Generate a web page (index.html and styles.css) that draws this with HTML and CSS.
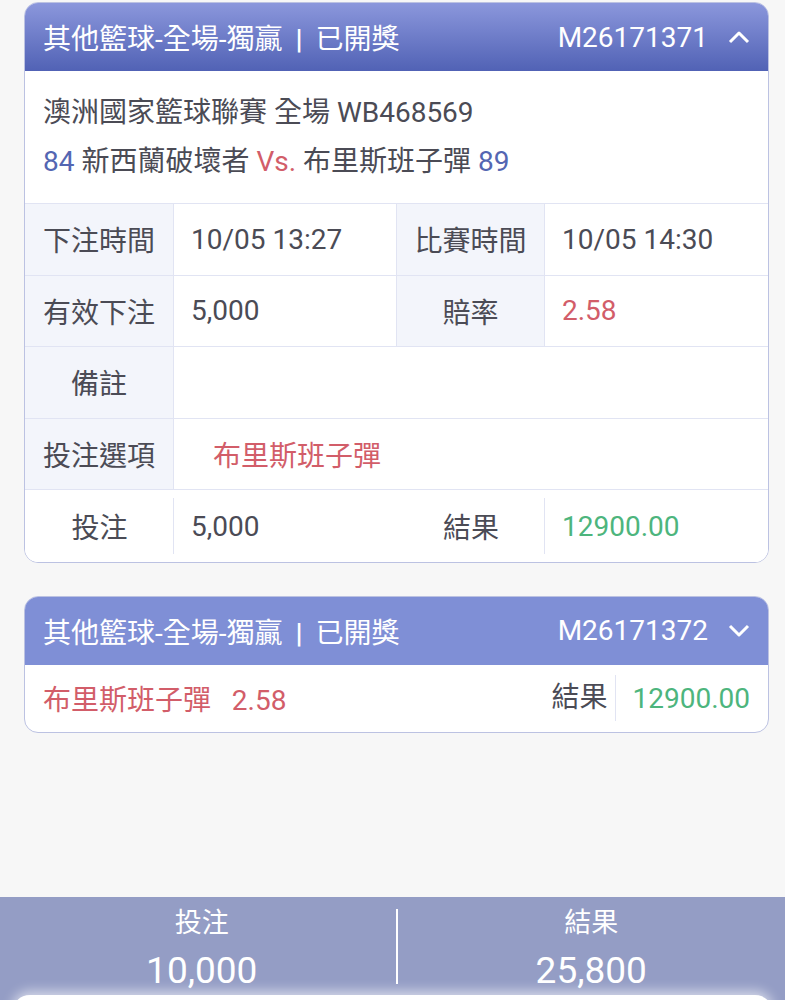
FILE: index.html
```html
<!DOCTYPE html>
<html lang="zh-Hant">
<head>
    <meta charset="UTF-8">
    <meta name="viewport" content="width=device-width, initial-scale=1.0">
    <title>注單明細</title>
    <link rel="stylesheet" href="styles.css">
</head>
<body>
<div class="page">
    <div class="list">
        <div class="card">
            <div class="card-head open">
                <span class="title">其他籃球-全場-獨贏 <b class="bar">|</b> 已開獎</span>
                <span class="order">M26171371
                    <svg class="chev" width="22" height="14" viewBox="0 0 22 14"><polyline points="2,12 11,3 20,12" fill="none" stroke="#fff" stroke-width="3" stroke-linejoin="round"/></svg>
                </span>
            </div>
            <div class="match">
                <div>澳洲國家籃球聯賽 全場 WB468569</div>
                <div><span class="blue">84</span> 新西蘭破壞者 <span class="red">Vs.</span> 布里斯班子彈 <span class="blue">89</span></div>
            </div>
            <div class="grid">
                <div class="lbl">下注時間</div>
                <div class="val">10/05 13:27</div>
                <div class="lbl">比賽時間</div>
                <div class="val">10/05 14:30</div>

                <div class="lbl">有效下注</div>
                <div class="val">5,000</div>
                <div class="lbl">賠率</div>
                <div class="val red">2.58</div>

                <div class="lbl">備註</div>
                <div class="val wide"></div>

                <div class="lbl">投注選項</div>
                <div class="val wide red pick">布里斯班子彈</div>

                <div class="lbl plain">投注</div>
                <div class="val plain sep">5,000</div>
                <div class="lbl plain">結果</div>
                <div class="val plain sep green">12900.00</div>
            </div>
        </div>

        <div class="card">
            <div class="card-head">
                <span class="title">其他籃球-全場-獨贏 <b class="bar">|</b> 已開獎</span>
                <span class="order">M26171372
                    <svg class="chev" width="22" height="14" viewBox="0 0 22 14"><polyline points="2,2 11,11 20,2" fill="none" stroke="#fff" stroke-width="3" stroke-linejoin="round"/></svg>
                </span>
            </div>
            <div class="summary">
                <span class="red">布里斯班子彈&nbsp;&nbsp;&nbsp;2.58</span>
                <span class="res">結果</span>
                <span class="green amount">12900.00</span>
            </div>
        </div>
    </div>

    <div class="footer">
        <div class="totals">
            <div class="total">
                <span>投注</span>
                <strong>10,000</strong>
            </div>
            <div class="divider"></div>
            <div class="total">
                <span>結果</span>
                <strong>25,800</strong>
            </div>
        </div>
        <div class="sheet"></div>
    </div>
</div>
</body>
</html>
```

FILE: styles.css
```css
body {
    margin: 0;
    background: #f7f7f7;
    font-family: Roboto, "Noto Sans CJK TC", sans-serif;
    color: #4b4b55;
    overflow: hidden;
}
.page {
    height: 1000px;
    display: flex;
    flex-direction: column;
}
.list {
    padding: 2px 16px 0 24px;
    display: flex;
    flex-direction: column;
    gap: 33px;
}
.card {
    background: #fff;
    border: 1px solid #bcc2e2;
    border-radius: 14px;
    overflow: hidden;
}
.card-head {
    height: 68px;
    display: flex;
    align-items: center;
    justify-content: space-between;
    padding: 0 18px;
    background: #7f8fd6;
    color: #fff;
    font-size: 28px;
}
.card-head.open {
    background: linear-gradient(#8b97dc, #5162b5);
}
.title .bar {
    font-weight: bold;
    margin: 0 6px;
}
.order {
    display: flex;
    align-items: center;
    gap: 20px;
}
.chev {
    display: block;
}
.match {
    padding: 17px 18px 17px;
    font-size: 28px;
    line-height: 49px;
    border-bottom: 1px solid #e1e4f3;
}
.blue {
    color: #5466b2;
}
.red {
    color: #d25d69;
}
.green {
    color: #4db57d;
}
.grid {
    display: grid;
    grid-template-columns: 149px 223px 148px 1fr;
    font-size: 28px;
}
.grid > div {
    box-sizing: border-box;
    height: 71.6px;
    display: flex;
    align-items: center;
    border-bottom: 1px solid #e1e4f3;
    border-right: 1px solid #e1e4f3;
}
.lbl {
    justify-content: center;
    background: #f3f5fb;
}
.val {
    padding-left: 17px;
}
.val.wide {
    grid-column: span 3;
    border-right: none;
}
.grid > div:nth-child(4),
.grid > div:nth-child(8) {
    border-right: none;
}
.val.pick {
    padding-left: 39px;
}
.grid > .plain {
    background: #fff;
    border-bottom: none;
    border-right: none;
}
.grid > .sep {
    position: relative;
}
.grid > .sep::before {
    content: "";
    position: absolute;
    left: -1px;
    top: 8px;
    bottom: 8px;
    width: 1px;
    background: #e1e4f3;
}
.summary {
    height: 67px;
    display: flex;
    align-items: center;
    padding: 0 18px;
    font-size: 28px;
}
.summary .res {
    margin-left: auto;
    padding-right: 8px;
    border-right: 1px solid #e1e4f3;
    line-height: 46px;
}
.summary .amount {
    padding-left: 16px;
}
.footer {
    margin-top: auto;
    height: 103px;
    overflow: hidden;
    background: #949dc5;
}
.totals {
    height: 98px;
    display: flex;
    align-items: center;
    padding-left: 8px;
    color: #fff;
}
.total {
    flex: 1;
    display: flex;
    flex-direction: column;
    align-items: center;
    padding-top: 3px;
}
.total span {
    font-size: 27px;
    line-height: 46px;
}
.total strong {
    font-weight: normal;
    font-size: 37px;
    line-height: 50px;
}
.divider {
    width: 2px;
    height: 75px;
    background: #fff;
}
.sheet {
    height: 30px;
    margin: 0 12px;
    background: #fff;
    border-radius: 18px 18px 0 0;
    box-shadow: 0 -4px 12px rgba(255, 255, 255, 0.6);
}
```
